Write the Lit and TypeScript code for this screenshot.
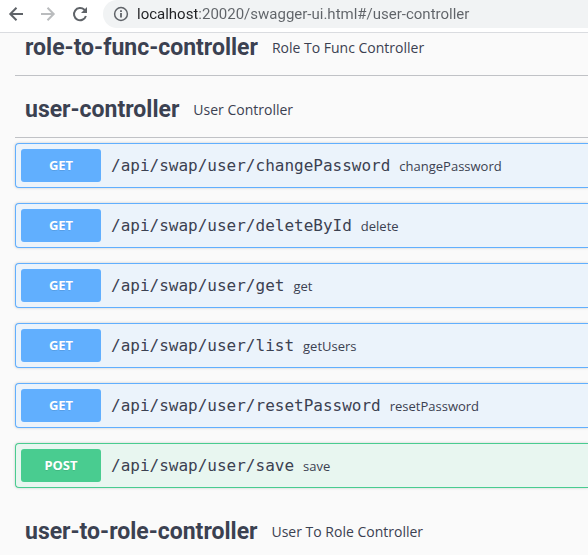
import { LitElement, html, css, svg } from "lit";
import { customElement, property } from "lit/decorators.js";
import { classMap } from "lit/directives/class-map.js";

interface Operation {
  method: string;
  path: string;
  summary: string;
}

interface Tag {
  name: string;
  description: string;
  operations: Operation[];
}

const op = (method: string, name: string, summary: string): Operation => ({
  method,
  path: `/api/swap/user/${name}`,
  summary,
});

const TAGS: Tag[] = [
  { name: "role-to-func-controller", description: "Role To Func Controller", operations: [] },
  {
    name: "user-controller",
    description: "User Controller",
    operations: [
      op("GET", "changePassword", "changePassword"),
      op("GET", "deleteById", "delete"),
      op("GET", "get", "get"),
      op("GET", "list", "getUsers"),
      op("GET", "resetPassword", "resetPassword"),
      op("POST", "save", "save"),
    ],
  },
  { name: "user-to-role-controller", description: "User To Role Controller", operations: [] },
];

const BACK = svg`<path d="M15 8H2.5M8.5 1.8L2.3 8l6.2 6.2" />`;
const FORWARD = svg`<path d="M1 8h12.5M7.5 1.8L13.7 8l-6.2 6.2" />`;

@customElement("browser-bar")
export class BrowserBar extends LitElement {
  static styles = css`
    :host {
      display: block;
      background: #fff;
      border-bottom: 1px solid #dadce0;
    }
    .bar {
      display: flex;
      align-items: center;
      height: 28px;
      padding: 0 0 4px;
    }
    .nav {
      display: grid;
      place-items: center;
      width: 32px;
      height: 28px;
      margin: 0;
      padding: 0;
      border: 0;
      background: none;
      color: #5f6368;
    }
    .nav:disabled {
      color: #babcbe;
    }
    svg {
      width: 16px;
      height: 16px;
      fill: none;
      stroke: currentColor;
      stroke-width: 2;
    }
    .solid {
      fill: currentColor;
      stroke: none;
    }
    .address {
      display: flex;
      flex: 1;
      align-items: center;
      gap: 8px;
      height: 28px;
      margin-left: 7px;
      padding-left: 10px;
      border-radius: 14px 0 0 14px;
      background: #f1f3f4;
      color: #5f6368;
    }
    .url {
      flex: 1;
      min-width: 0;
      height: 28px;
      padding: 0;
      border: 0;
      outline: 0;
      font: 15px/28px Roboto, sans-serif;
      color: transparent;
      background: linear-gradient(90deg, #202124 60px, #5f6368 60px);
      -webkit-background-clip: text;
      background-clip: text;
    }
  `;

  render() {
    return html`
      <nav class="bar">
        <button class="nav" aria-label="Back"><svg viewBox="0 0 16 16">${BACK}</svg></button>
        <button class="nav" aria-label="Forward" disabled>
          <svg viewBox="0 0 16 16">${FORWARD}</svg>
        </button>
        <button class="nav" aria-label="Reload">
          <svg viewBox="0 0 16 16">
            <path d="M13.9 10A6.1 6.1 0 1 1 12.4 3.8L14 5.5" />
            <path class="solid" d="M15 1v6H9z" />
          </svg>
        </button>
        <label class="address">
          <svg viewBox="0 0 16 16" aria-hidden="true">
            <circle cx="8" cy="8" r="6.4" stroke-width="1.5" />
            <path class="solid" d="M7.1 7h1.8v4.5H7.1zM7.1 4.3h1.8v1.8H7.1z" />
          </svg>
          <input
            class="url"
            type="text"
            aria-label="Address"
            spellcheck="false"
            value="localhost:20020/swagger-ui.html#/user-controller"
          />
        </label>
      </nav>
    `;
  }
}

@customElement("api-operation")
export class ApiOperation extends LitElement {
  @property({ attribute: false }) operation!: Operation;

  static styles = css`
    :host {
      display: block;
    }
    .operation {
      display: flex;
      align-items: center;
      width: 100%;
      margin: 0;
      padding: 5px;
      border: 1px solid #61affe;
      border-right: 0;
      border-radius: 4px 0 0 4px;
      background: #ebf3fb;
      box-shadow: 0 0 3px rgba(0, 0, 0, 0.19);
      color: #3b4151;
      text-align: left;
      white-space: nowrap;
    }
    .operation.post {
      border-color: #49cc90;
      background: #e8f6f0;
    }
    .method {
      width: 80px;
      border-radius: 3px;
      background: #61affe;
      color: #fff;
      font: 700 13px/33px "Noto Sans", "Open Sans", sans-serif;
      text-align: center;
      text-shadow: 0 1px 0 rgba(0, 0, 0, 0.1);
    }
    .post .method {
      background: #49cc90;
    }
    .path {
      padding: 0 9px 0 10px;
      font: 16px/20px "DejaVu Sans Mono", monospace;
    }
    .summary {
      font: 13px/20px "Open Sans", sans-serif;
    }
  `;

  render() {
    const { method, path, summary } = this.operation;
    return html`
      <button class=${classMap({ operation: true, post: method === "POST" })}>
        <span class="method">${method}</span>
        <span class="path">${path}</span>
        <span class="summary">${summary}</span>
      </button>
    `;
  }
}

@customElement("app-root")
export class AppRoot extends LitElement {
  static styles = css`
    :host {
      display: block;
      min-height: 100vh;
      background: #fafafa;
      color: #3b4151;
    }
    main {
      padding-left: 15px;
    }
    .tag {
      display: flex;
      align-items: center;
      gap: 14px;
      padding: 19px 10px 12px;
      border-bottom: 1px solid rgba(59, 65, 81, 0.3);
      white-space: nowrap;
    }
    section:first-child .tag {
      padding-top: 0;
    }
    section:last-child .tag {
      border-bottom: 0;
      padding-bottom: 0;
    }
    h2 {
      margin: 0;
      font: 700 23px/30px Roboto, sans-serif;
    }
    h2 a {
      color: inherit;
      text-decoration: none;
    }
    .description {
      margin: 0;
      font: 14px/30px "Open Sans", sans-serif;
    }
    .operations {
      display: grid;
      gap: 15px;
      padding: 5px 0 10px;
    }
  `;

  render() {
    return html`
      <browser-bar></browser-bar>
      <main>
        ${TAGS.map(
          (tag) => html`
            <section>
              <div class="tag">
                <h2><a href="#/${tag.name}">${tag.name}</a></h2>
                <p class="description">${tag.description}</p>
              </div>
              ${tag.operations.length
                ? html`<div class="operations">
                    ${tag.operations.map(
                      (operation) => html`<api-operation .operation=${operation}></api-operation>`
                    )}
                  </div>`
                : null}
            </section>
          `
        )}
      </main>
    `;
  }
}
